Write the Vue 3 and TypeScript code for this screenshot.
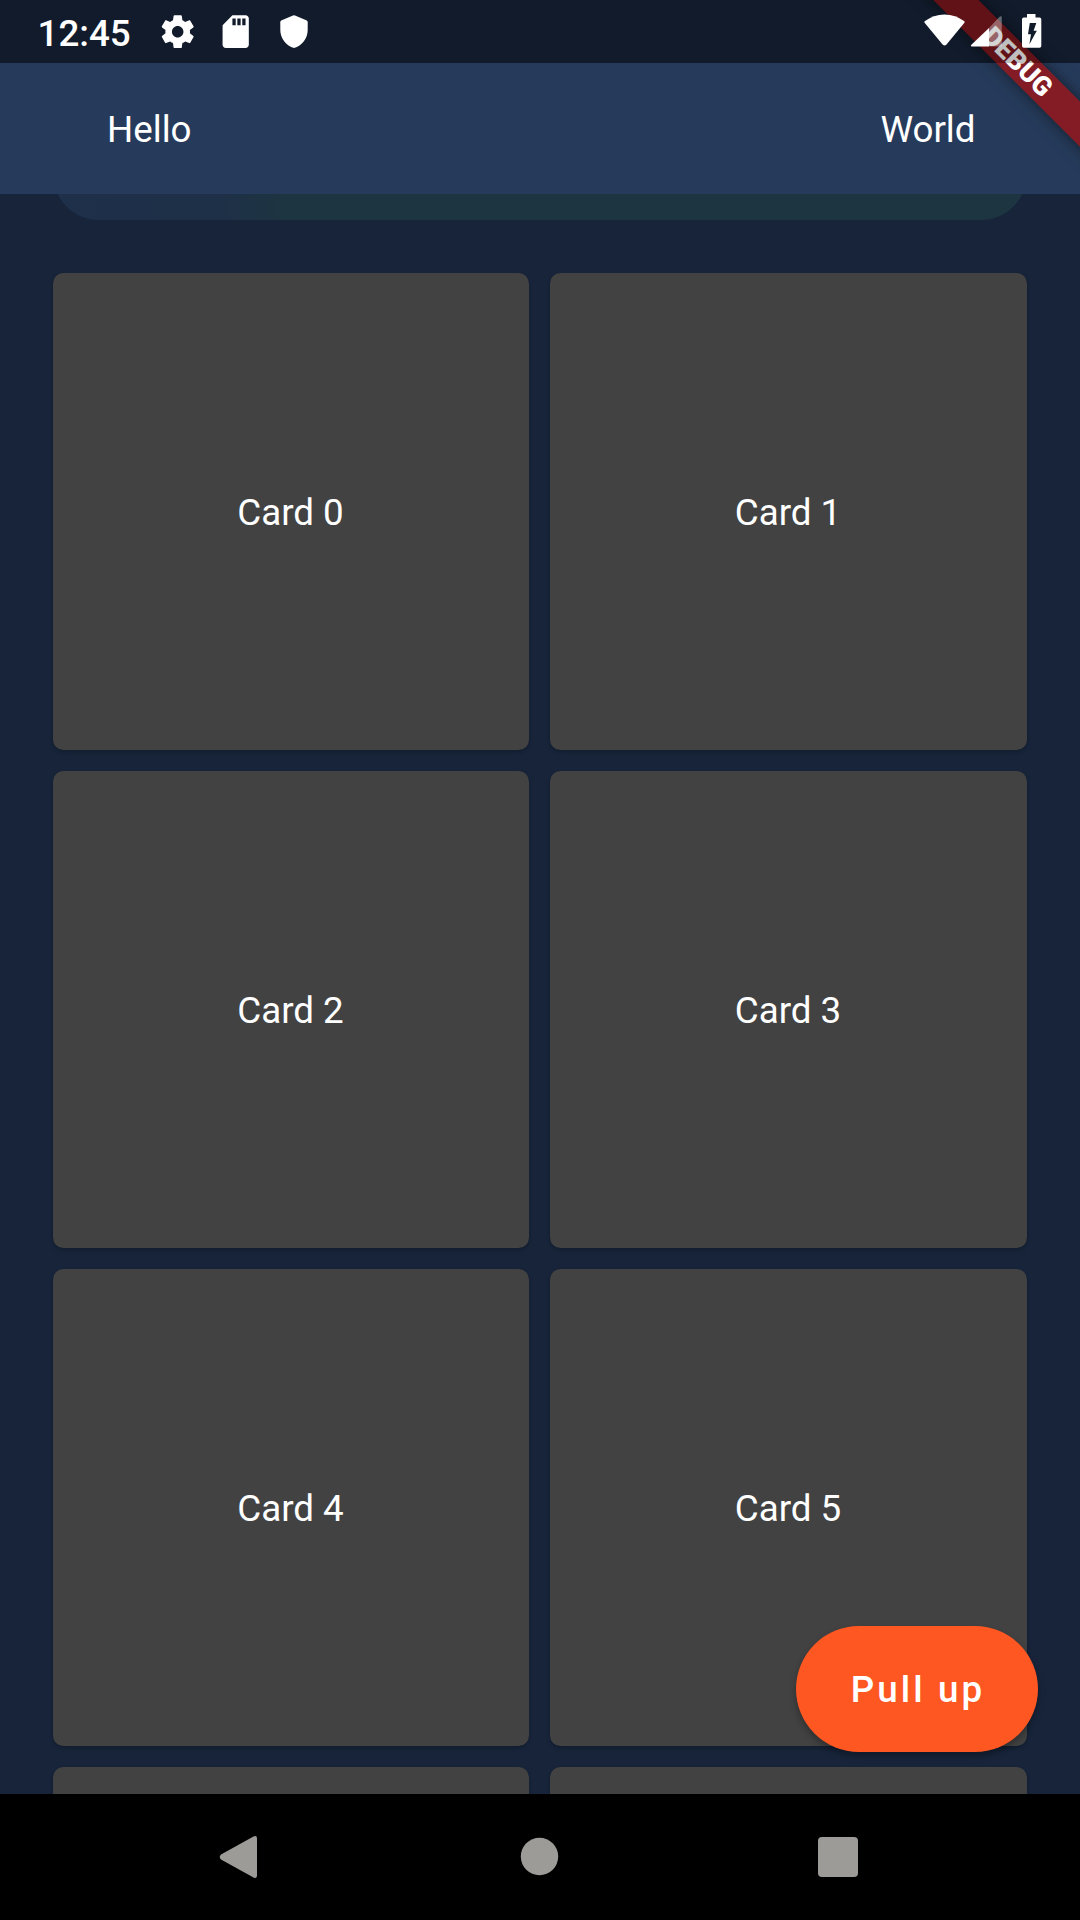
<script setup lang="ts">
const cards: string[] = Array.from({ length: 6 }, (_, i) => `Card ${i}`)
</script>

<template>
  <div class="screen">
    <header class="app-bar">
      <span>Hello</span>
      <span>World</span>
    </header>

    <main class="body">
      <div class="panel"></div>
      <div class="grid">
        <div v-for="card in cards" :key="card" class="card">{{ card }}</div>
        <div class="card"></div>
        <div class="card"></div>
      </div>
    </main>

    <nav class="nav-bar">
      <svg viewBox="0 0 1080 126" width="1080" height="126" fill="#9c9b97">
        <path d="M221 60.5L253.5 42.6Q257 41 257 44.500V81.500Q257 85 253.500 83.400L221 65.500Q218.500 63 221 60.500Z" />
        <circle cx="539.500" cy="62.500" r="18.700" />
        <rect x="818" y="43" width="40" height="40" rx="4" />
      </svg>
    </nav>

    <button class="fab">Pull up</button>

    <div class="banner-clip">
      <div class="banner">DEBUG</div>
    </div>

    <div class="status-bar">
      <div class="status-left">
        <span class="time">12:45</span>
        <svg class="gear" viewBox="0 0 24 24" width="39.400" height="39.400" fill="#fff">
          <path d="M19.430 12.980c.04-.32.07-.64.07-.98s-.03-.66-.07-.98l2.110-1.650c.19-.15.24-.42.12-.64l-2-3.460c-.12-.22-.39-.3-.61-.22l-2.490 1c-.52-.4-1.080-.73-1.690-.98l-.38-2.650C14.460 2.180 14.250 2 14 2h-4c-.25 0-.46.18-.49.42l-.38 2.650c-.61.25-1.170.59-1.690.98l-2.490-1c-.23-.09-.49 0-.61.22l-2 3.460c-.13.22-.07.49.12.64l2.110 1.650c-.04.32-.07.65-.07.98s.03.66.07.98l-2.110 1.650c-.19.15-.24.42-.12.64l2 3.460c.12.22.39.3.61.22l2.490-1c.52.4 1.080.73 1.690.98l.38 2.650c.03.24.24.42.49.42h4c.25 0 .46-.18.49-.42l.38-2.650c.61-.25 1.170-.59 1.690-.98l2.490 1c.23.09.49 0 .61-.22l2-3.460c.12-.22.07-.49-.12-.64l-2.110-1.650zM12 15.500c-1.930 0-3.500-1.570-3.500-3.500s1.570-3.500 3.500-3.500 3.500 1.570 3.500 3.500-1.570 3.500-3.500 3.500z" />
        </svg>
        <svg class="sd" viewBox="0 0 24 24" width="39.400" height="39.400" fill="#fff">
          <path d="M18 2h-8L4.020 8 4 20c0 1.100.9 2 2 2h12c1.100 0 2-.9 2-2V4c0-1.100-.9-2-2-2zm-6 6h-2V4h2v4zm3 0h-2V4h2v4zm3 0h-2V4h2v4z" />
        </svg>
        <svg class="shield" viewBox="0 0 28 33" width="28" height="33" fill="#fff">
          <path d="M13 .4Q14 0 15 .4L26.300 5.200Q27.700 5.900 27.700 7.300V15C27.700 23.500 22 30.800 14 33C6 30.800 .3 23.500 .3 15V7.300Q.3 5.900 1.700 5.200Z" />
        </svg>
      </div>
      <svg class="status-right" viewBox="0 0 126 36" width="126" height="36">
        <path fill="#fff" d="M.6 7.300Q9.500 .4 20.500 .4Q31.500 .4 40.400 7.300Q41 8 40.400 8.800L22.300 30.800Q20.500 32.400 18.800 30.800L.6 8.800Q0 8 .6 7.300Z" />
        <path fill="#fff" fill-opacity=".35" d="M65 14L75.800 2.600Q77.800 1.400 77.800 3.500V30.800Q77.800 32.600 76 32.600H65Z" />
        <path fill="#fff" d="M65 14V32.600H48Q46 32.300 47.400 30.800Z" />
        <path fill="#fff" fill-rule="evenodd" d="M103 0H111.500V3.500H115.500Q117.300 3.500 117.300 5.300V32Q117.300 33.800 115.500 33.800H99.800Q98 33.800 98 32V5.300Q98 3.500 99.800 3.500H103ZM105.800 9L104 20.300H107L105.400 30.300L112.800 16.800H109.600L112.300 9Z" />
      </svg>
    </div>
  </div>
</template>

<style>
body {
  margin: 0;
  background: #000;
}
</style>

<style scoped>
.screen {
  position: relative;
  width: 1080px;
  height: 1920px;
  padding-top: 63px;
  box-sizing: border-box;
  display: flex;
  flex-direction: column;
  overflow: hidden;
  background: #17243a;
  color: #fff;
  font-family: Roboto, sans-serif;
  font-size: 36.75px;
}

.app-bar {
  flex: none;
  height: 131px;
  padding: 2px 104.5px 0 107px;
  box-sizing: border-box;
  display: flex;
  align-items: center;
  justify-content: space-between;
  background: #263b5b;
}

.body {
  flex: 1;
  min-height: 0;
  padding: 0 53px;
  overflow: hidden;
}

.panel {
  height: 105px;
  margin-top: -79px;
  margin-bottom: 53px;
  border-radius: 46px;
  background: linear-gradient(90deg, #1e304a 0, #1e3047 170px, #1d3441 230px, #1d3441 100%);
  clip-path: inset(79px 0 0 0);
}

.grid {
  display: grid;
  grid-template-columns: 476px 477px;
  grid-auto-rows: 477px;
  gap: 21px;
}

.card {
  display: flex;
  align-items: center;
  justify-content: center;
  padding: 2px 1px 0 0;
  box-sizing: border-box;
  border-radius: 10.5px;
  background: #424242;
  box-shadow: 0 2px 4px rgba(0, 0, 0, 0.22);
}

.nav-bar {
  flex: none;
  height: 126px;
  position: relative;
  background: #000;
}

.nav-bar svg {
  display: block;
}

.fab {
  position: absolute;
  right: 42px;
  bottom: 168px;
  width: 242px;
  height: 126px;
  padding: 0 0 0 2px;
  border: 0;
  border-radius: 63px;
  background: #ff5722;
  color: #fff;
  font: 500 36.75px Roboto, sans-serif;
  letter-spacing: 3.1px;
  box-shadow: 0 4px 7px rgba(0, 0, 0, 0.3);
}

.banner-clip {
  position: absolute;
  inset: 0;
  overflow: hidden;
  pointer-events: none;
}

.banner {
  position: absolute;
  left: 869px;
  top: 47px;
  width: 300px;
  height: 31.5px;
  padding-right: 3px;
  box-sizing: border-box;
  line-height: 33px;
  text-align: center;
  font-size: 26.8px;
  font-weight: 900;
  background: rgba(154, 22, 26, 0.82);
  box-shadow: 0 0 16px rgba(0, 0, 0, 0.5);
  transform: rotate(45deg);
}

.status-bar {
  position: absolute;
  top: 0;
  left: 0;
  width: 1080px;
  height: 63px;
  display: flex;
  justify-content: space-between;
  background: rgba(0, 0, 0, 0.25);
}

.status-left {
  display: flex;
  align-items: center;
  padding-left: 37.5px;
}

.time {
  width: 120.300px;
  padding-top: 3px;
  font-weight: 500;
}

.sd {
  margin-left: 19px;
}

.shield {
  margin-left: 24px;
}

.status-right {
  margin: 14px 30px 0 0;
}
</style>
